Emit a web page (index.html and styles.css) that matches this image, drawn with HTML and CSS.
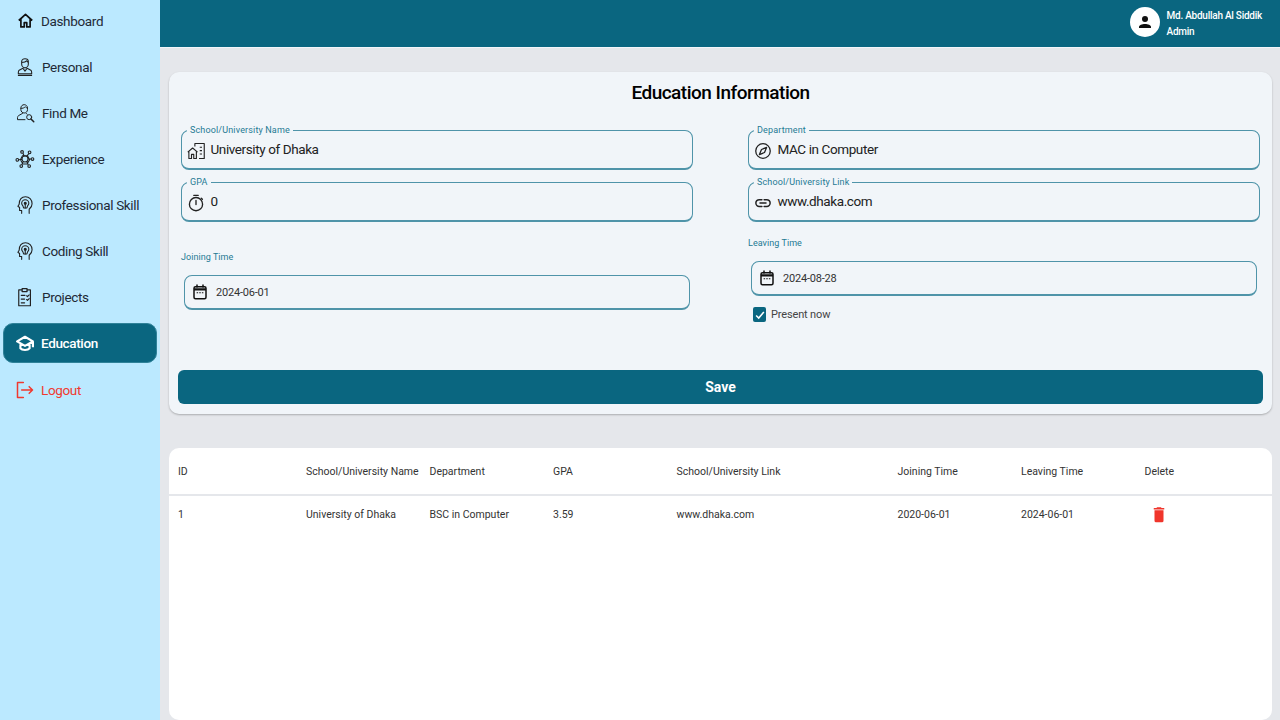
FILE: index.html
```html
<!DOCTYPE html>
<html lang="en">
<head>
    <meta charset="UTF-8">
    <title>Education</title>
    <link rel="stylesheet" href="styles.css">
</head>
<body>
    <aside class="sidebar">
        <a class="nav-item">
            <svg class="nav-icon" viewBox="0 0 24 24" fill="none" stroke="#111" stroke-width="2.4" stroke-linejoin="round"><path d="M2.500 12 12 3.500l9.500 8.500M5.500 9.500V21h4.700v-6h3.600v6h4.700V9.500"/></svg>
            <span>Dashboard</span>
        </a>
        <a class="nav-item">
            <svg class="nav-icon big" viewBox="0 0 24 24" fill="none" stroke="#222" stroke-width="1.3" stroke-linejoin="round"><path d="M8 5.500C8 3 10 2 12 2s4 1 4 3.500v3c0 2.500-2 4.500-4 4.500s-4-2-4-4.500zM8 6.500c2 0 5-.5 6-2 .5 1 1 1.500 2 2M9.500 13.500 5 16c-.8.500-1 1.500-1 2.500V20h16v-1.500c0-1-.2-2-1-2.500l-4.500-2.500M9.500 13.500 12 17l2.500-3.500M3.500 22h17"/></svg>
            <span>Personal</span>
        </a>
        <a class="nav-item">
            <svg class="nav-icon big" viewBox="0 0 24 24" fill="none" stroke="#222" stroke-width="1.2" stroke-linejoin="round" stroke-linecap="round"><path d="M7 6c0-2.500 2-4 4-4s4 1.500 4 4v2c0 2.500-2 4-4 4s-4-1.500-4-4zM7 6.500c2 0 4-.5 5.500-2 .5 1 1.500 1.500 2.500 2M9 12.500 4.500 15C3.500 15.500 3 16.500 3 17.500V20h9M13.500 12.500l1 1"/><circle cx="17" cy="17" r="3"/><path d="M19.200 19.200 22.500 22.500" stroke-width="1.800"/></svg>
            <span>Find Me</span>
        </a>
        <a class="nav-item">
            <svg class="nav-icon big" viewBox="0 0 24 24" fill="none" stroke="#222" stroke-width="1.300"><circle cx="12" cy="12" r="3.600"/><circle cx="8.500" cy="3.500" r="1.600"/><circle cx="17.500" cy="4" r="1.600"/><circle cx="2.800" cy="13" r="1.600"/><circle cx="21" cy="12" r="1.600"/><circle cx="7.500" cy="20.500" r="1.600"/><circle cx="17" cy="20.500" r="1.600"/><path d="M9.500 5 11 8.500M16.500 5.500 14 9M4.400 13l4-.5M19.400 12h-3.800M8 19l2-4M16 19l-2-4M9 8h6l2.500 5-3 5h-5l-3-5z"/></svg>
            <span>Experience</span>
        </a>
        <a class="nav-item">
            <svg class="nav-icon big" viewBox="0 0 24 24" fill="none" stroke="#222" stroke-width="1.300" stroke-linecap="round" stroke-linejoin="round"><path d="M8 22v-3.500H5.500V15L3.500 13.500 5 11C5 5.500 8 2 12.500 2S20.500 5.500 20.500 10.500c0 3.500-2 5-3.500 6.500v5"/><path d="M9.500 13c-1-1-1.500-2-1.500-3a4.300 4.300 0 0 1 8.600 0c0 1-.5 2-1.500 3l-.8 2.500h-4z"/><path d="M12.300 9.500v6"/><circle cx="12.300" cy="9.800" r="1.200" fill="#222"/></svg>
            <span>Professional Skill</span>
        </a>
        <a class="nav-item">
            <svg class="nav-icon big" viewBox="0 0 24 24" fill="none" stroke="#222" stroke-width="1.300" stroke-linecap="round" stroke-linejoin="round"><path d="M8 22v-3.500H5.500V15L3.500 13.500 5 11C5 5.500 8 2 12.500 2S20.500 5.500 20.500 10.500c0 3.500-2 5-3.500 6.500v5"/><path d="M9.500 13c-1-1-1.500-2-1.500-3a4.300 4.300 0 0 1 8.600 0c0 1-.5 2-1.500 3l-.8 2.500h-4z"/><path d="M12.300 9.500v6"/><circle cx="12.300" cy="9.800" r="1.200" fill="#222"/></svg>
            <span>Coding Skill</span>
        </a>
        <a class="nav-item">
            <svg class="nav-icon big" viewBox="0 0 24 24" fill="none" stroke="#222" stroke-width="1.400" stroke-linecap="round" stroke-linejoin="round"><path d="M8.500 3.500H4.500v19h14v-19h-4"/><path d="M8.500 2h6v3.500h-6zM7.500 10h4.500M7.500 14.500h4M7.500 19h4M14 10.500l1 1 2-2M14 15l1 1 2-2"/></svg>
            <span>Projects</span>
        </a>
        <a class="nav-item active">
            <svg class="nav-icon big" viewBox="0 0 24 24" fill="none" stroke="#fff" stroke-width="2.600" stroke-linejoin="round"><path d="M12 4.500 2.500 10 12 15.500l9.500-5.500zM6.500 13.500v5c2 2.500 9 2.500 11 0v-5M21.500 10v7"/></svg>
            <span>Education</span>
        </a>
        <a class="nav-item logout">
            <svg class="nav-icon big" viewBox="0 0 24 24" fill="none" stroke="#f0392f" stroke-width="1.800" stroke-linecap="round" stroke-linejoin="round"><path d="M10 3H3v18h7M8 12h13M17 8l4 4-4 4"/></svg>
            <span>Logout</span>
        </a>
    </aside>

    <div class="main">
        <header class="topbar">
            <div class="avatar">
                <svg viewBox="0 0 24 24" fill="#111"><circle cx="12" cy="8" r="4"/><path d="M4 20v-1.500C4 16 8 14.500 12 14.500s8 1.500 8 4V20z"/></svg>
            </div>
            <div class="user">
                <span>Md. Abdullah Al Siddik</span>
                <span>Admin</span>
            </div>
        </header>

        <div class="content">
            <section class="card form-card">
                <h1>Education Information</h1>
                <div class="form-grid">
                    <div class="col">
                        <div class="field">
                            <label>School/University Name</label>
                            <svg class="field-icon" viewBox="0 0 24 24" fill="none" stroke="#222" stroke-width="1.500" stroke-linejoin="round"><path d="M1 13.500 7.500 8l6.500 5.500M2.500 12.500V22h3.500v-5.500h3V22h3.500v-9.500M10.500 6V2h12.500v20h-7M17 7h3M17 11.500h3M17 16h3"/></svg>
                            <span class="value">University of Dhaka</span>
                        </div>
                        <div class="field">
                            <label>GPA</label>
                            <svg class="field-icon" viewBox="0 0 24 24" fill="none" stroke="#222" stroke-width="1.800" stroke-linecap="round"><circle cx="12" cy="13.500" r="8.800"/><path d="M9 1.800h6M12 8.500v5.500M19 5.500l1.500 1.500"/></svg>
                            <span class="value">0</span>
                        </div>
                        <div class="date-group joining">
                            <span class="date-label">Joining Time</span>
                            <div class="date-input">
                                <svg class="cal-icon" viewBox="0 0 24 24" fill="none" stroke="#111" stroke-width="2"><rect x="4" y="5" width="16" height="16" rx="2"/><path d="M8 2v4M16 2v4"/><path d="M4 8.500h16" stroke-width="3"/><path d="M7.500 13h2M11 13h2M14.500 13h2" stroke-width="1.500"/></svg>
                                <span>2024-06-01</span>
                            </div>
                        </div>
                    </div>
                    <div class="col">
                        <div class="field">
                            <label>Department</label>
                            <svg class="field-icon" viewBox="0 0 24 24" fill="none" stroke="#222" stroke-width="1.700" stroke-linejoin="round"><circle cx="12" cy="12" r="9.700"/><path d="M16.800 7.200 14 14l-6.800 2.800L10 10z"/></svg>
                            <span class="value">MAC in Computer</span>
                        </div>
                        <div class="field">
                            <label>School/University Link</label>
                            <svg class="field-icon" viewBox="0 0 24 24" fill="none" stroke="#222" stroke-width="2" stroke-linecap="round"><path d="M10.500 7.500H7a4.500 4.500 0 0 0 0 9h3.500M13.500 7.500H17a4.500 4.500 0 0 1 0 9h-3.500M8 12h8"/></svg>
                            <span class="value">www.dhaka.com</span>
                        </div>
                        <div class="date-group leaving">
                            <span class="date-label">Leaving Time</span>
                            <div class="date-input">
                                <svg class="cal-icon" viewBox="0 0 24 24" fill="none" stroke="#111" stroke-width="2"><rect x="4" y="5" width="16" height="16" rx="2"/><path d="M8 2v4M16 2v4"/><path d="M4 8.500h16" stroke-width="3"/><path d="M7.500 13h2M11 13h2M14.500 13h2" stroke-width="1.500"/></svg>
                                <span>2024-08-28</span>
                            </div>
                            <div class="present">
                                <span class="check"><svg viewBox="0 0 14 14" fill="none" stroke="#fff" stroke-width="1.800"><path d="M2.500 7.500 5.500 10.500 11.500 3.500"/></svg></span>
                                <span>Present now</span>
                            </div>
                        </div>
                    </div>
                </div>
                <button class="save">Save</button>
            </section>

            <section class="card table-card">
                <table>
                    <colgroup>
                        <col class="c-id"><col class="c-std"><col class="c-std"><col class="c-std"><col class="c-link"><col class="c-std"><col class="c-std"><col>
                    </colgroup>
                    <thead>
                        <tr>
                            <th>ID</th><th>School/University Name</th><th>Department</th><th>GPA</th><th>School/University Link</th><th>Joining Time</th><th>Leaving Time</th><th>Delete</th>
                        </tr>
                    </thead>
                    <tbody>
                        <tr>
                            <td>1</td><td>University of Dhaka</td><td>BSC in Computer</td><td>3.59</td><td>www.dhaka.com</td><td>2020-06-01</td><td>2024-06-01</td>
                            <td><svg class="trash" viewBox="0 0 24 24" fill="#f0352b"><path d="M6 21V7h12v14a2 2 0 0 1-2 2H8a2 2 0 0 1-2-2zM19 4h-3.500l-1-1h-5l-1 1H5v2h14z"/></svg></td>
                        </tr>
                    </tbody>
                </table>
            </section>
        </div>
    </div>
</body>
</html>
```

FILE: styles.css
```css
* {
    box-sizing: border-box;
}
html, body {
    height: 100%;
}
body {
    margin: 0;
    display: flex;
    height: 720px;
    overflow: hidden;
    font-family: Roboto, "Liberation Sans", sans-serif;
    background-color: #e5e7eb;
    color: #222;
}
.sidebar {
    width: 160px;
    flex-shrink: 0;
    background-color: #bbe9ff;
    padding: 0.5px 3px 0;
    display: flex;
    flex-direction: column;
    gap: 6.15px;
}
.nav-item {
    display: flex;
    align-items: center;
    height: 40px;
    padding-left: 13px;
    gap: 7px;
    font-size: 13.5px;
    letter-spacing: -0.35px;
    color: #1f2937;
    border-radius: 10px;
}
.nav-icon {
    width: 17px;
    height: 17px;
    margin-left: 1px;
    flex-shrink: 0;
}
.nav-icon.big {
    width: 20px;
    height: 20px;
    margin-left: -1px;
}
.nav-item.active {
    background-color: #0a6680;
    color: #fff;
    font-weight: 500;
    border: 1px solid #2f8299;
    padding-left: 12px;
    gap: 6px;
}
.nav-item.logout {
    color: #f0392f;
    gap: 6px;
}
.main {
    flex: 1;
    min-width: 0;
    display: flex;
    flex-direction: column;
}
.topbar {
    height: 48px;
    flex-shrink: 0;
    background-color: #0a6680;
    border-bottom: 1px solid #f1f5f9;
    display: flex;
    justify-content: flex-end;
    align-items: center;
    padding: 0 18px 0 0;
    gap: 7px;
    color: #fff;
}
.avatar {
    width: 30px;
    height: 30px;
    margin-bottom: 3px;
    border-radius: 50%;
    background-color: #fff;
    display: flex;
    align-items: center;
    justify-content: center;
}
.avatar svg {
    width: 18px;
    height: 18px;
}
.user {
    display: flex;
    flex-direction: column;
    gap: 2px;
    font-size: 10px;
    line-height: 14px;
    font-weight: 500;
    letter-spacing: -0.25px;
}
.content {
    flex: 1;
    padding: 24px 8px 0 9px;
    display: flex;
    flex-direction: column;
    gap: 34px;
}
.card {
    border-radius: 10px;
}
.form-card {
    height: 342px;
    background-color: #f1f5f9;
    padding: 8px 9px 0;
    box-shadow: 0 1px 2px rgba(0,0,0,0.25);
}
h1 {
    margin: 0 0 24px;
    text-align: center;
    font-size: 19px;
    line-height: 26px;
    font-weight: 500;
    letter-spacing: -0.5px;
    color: #000;
}
.form-grid {
    display: grid;
    grid-template-columns: 512px 512px;
    column-gap: 55px;
    padding-left: 3px;
    height: 240px;
}
.col {
    display: flex;
    flex-direction: column;
    gap: 12px;
}
.field {
    position: relative;
    height: 40px;
    border: 1px solid #4f94a9;
    border-bottom-width: 2px;
    border-radius: 8px;
    display: flex;
    align-items: center;
    padding-left: 5px;
    gap: 5.5px;
}
.field label {
    position: absolute;
    top: -5px;
    left: 5px;
    padding: 0 3px;
    font-size: 9px;
    line-height: 9px;
    letter-spacing: 0.15px;
    color: #1f7a94;
    background-color: #f1f5f9;
}
.field-icon {
    width: 18px;
    height: 18px;
    margin-top: 2px;
    flex-shrink: 0;
}
.value {
    font-size: 13.5px;
    letter-spacing: -0.4px;
    color: #222;
    margin-top: -1px;
}
.date-label {
    display: block;
    font-size: 9px;
    line-height: 12px;
    letter-spacing: 0.05px;
    color: #1f7a94;
}
.date-input {
    height: 35px;
    margin: 12px 3px 0;
    border: 1px solid #4f94a9;
    border-bottom-width: 2px;
    border-radius: 8px;
    display: flex;
    align-items: center;
    padding-left: 6px;
    gap: 7px;
    font-size: 11px;
    letter-spacing: -0.2px;
    color: #333;
}
.cal-icon {
    width: 18px;
    height: 18px;
    flex-shrink: 0;
}
.joining {
    margin-top: 17px;
}
.leaving {
    margin-top: 3px;
}
.present {
    display: flex;
    align-items: center;
    gap: 5px;
    margin: 11px 0 0 5px;
    font-size: 11px;
    letter-spacing: -0.15px;
    color: #444;
}
.check {
    width: 13px;
    height: 15px;
    border-radius: 2px;
    background-color: #0a6680;
    display: flex;
    align-items: center;
    justify-content: center;
}
.check svg {
    width: 12px;
    height: 12px;
}
.save {
    display: block;
    width: 1085px;
    height: 34px;
    border: none;
    border-radius: 6px;
    background-color: #0a6680;
    color: #fff;
    font-family: inherit;
    font-size: 14px;
    font-weight: 700;
}
.table-card {
    flex: 1;
    background-color: #fff;
}
table {
    width: 100%;
    table-layout: fixed;
    border-collapse: collapse;
    font-size: 10.5px;
    color: #333;
}
.c-id {
    width: 128px;
}
.c-std {
    width: 123.5px;
}
.c-link {
    width: 221px;
}
th {
    height: 47px;
    padding: 0 0 0 9px;
    text-align: left;
    font-weight: 400;
    white-space: nowrap;
    border-bottom: 2px solid #e5e7eb;
}
td {
    height: 38px;
    padding: 0 0 0 9px;
}
.trash {
    display: block;
    width: 18px;
    height: 18px;
    margin: 0 0 2px 5px;
}
```
